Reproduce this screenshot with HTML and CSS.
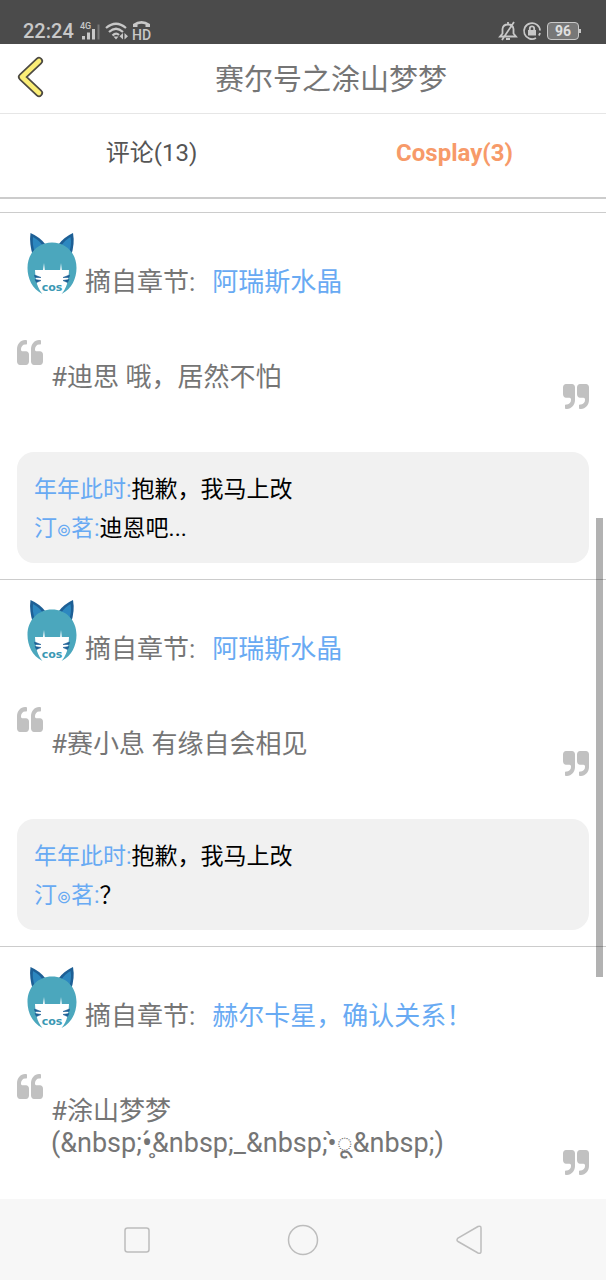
FILE: index.html
```html
<!DOCTYPE html>
<html lang="zh-CN">
<head>
<meta charset="utf-8">
<meta name="viewport" content="width=device-width, initial-scale=1">
<title>赛尔号之涂山梦梦</title>
<link rel="stylesheet" href="styles.css">
</head>
<body>
<svg class="defs" width="0" height="0" aria-hidden="true">
  <symbol id="quote" viewBox="0 128 1664 1408" preserveAspectRatio="none">
    <path d="M768 960v384q0 80-56 136t-136 56h-384q-80 0-136-56t-56-136v-704q0-104 40.500-198.500t109.500-163.500 163.500-109.500 198.500-40.500h64q26 0 45 19t19 45v128q0 26-19 45t-45 19h-64q-106 0-181 75t-75 181v32q0 40 28 68t68 28h224q80 0 136 56t56 136zm896 0v384q0 80-56 136t-136 56h-384q-80 0-136-56t-56-136v-704q0-104 40.500-198.500t109.500-163.500 163.500-109.500 198.500-40.500h64q26 0 45 19t19 45v128q0 26-19 45t-45 19h-64q-106 0-181 75t-75 181v32q0 40 28 68t68 28h224q80 0 136 56t56 136z"/>
  </symbol>
  <symbol id="cat" viewBox="0 0 50 64">
    <path d="M3.500 1Q13 5 19 13L6 24Q2 12 3.500 1z" fill="#1d5f95"/>
    <path d="M46 1Q37 5 31 13L44 24Q48 12 46 1z" fill="#1d5f95"/>
    <path d="M6 5Q12 8 16 14L8 21Q5 12 6 5z" fill="#2c87bf"/>
    <path d="M43.500 5Q38 8 34 14L42 21Q45 12 43.500 5z" fill="#2c87bf"/>
    <path d="M15.500 62C5 57 .5 46 .5 36C.5 21 11 10.500 25 10.500S49.500 21 49.500 36C49.500 46 45 57 34.500 62C39 57 41.500 50 42 38H34.800L34 31L33.200 38H17.800L17 31L16 38H8C8.500 50 11 57 15.500 62z" fill="#4ba7bd"/>
    <path d="M7.500 43L14 45.500L8 45.500zM8 47.500L14 48.500L9.500 50.500zM42.500 43L36 45.500L42 45.500zM42 47.500L36 48.500L40.500 50.500z" fill="#1d5f95" stroke="#1d5f95" stroke-width=".6"/>
    <text x="25" y="59" text-anchor="middle" class="cat-text">cos</text>
  </symbol>
</svg>

<div class="status">
  <div class="status-group">
    <span class="clock">22:24</span>
    <svg width="19" height="18" viewBox="0 0 19 18" fill="#c8c8c8"><text x="0" y="7" class="net-text">4G</text><path d="M2 14h3v3.500H2zM7 10.500h3v7H7zM12 7h3v10.500h-3z"/><path d="M17.500 2.500h2v15h-2z" fill="#777"/></svg>
    <svg width="22" height="18" viewBox="0 0 22 18" fill="none" stroke="#c8c8c8" stroke-width="2.200"><path d="M1 6Q11-2.500 21 6M4 10Q11 3.500 18 10M7.500 13.500Q11 10 14 13"/><path d="M8.500 14.500h5L11 17.500zM18 11v6.500l-3.500-3.200zM19.500 11v6.500l3.500-3.200z" fill="#c8c8c8" stroke="none"/></svg>
    <svg width="18" height="20" viewBox="0 0 18 20" fill="#c8c8c8"><path d="M0 6V3Q8.500-3 17 3v3h-4.500V3.500Q8.500 2.200 4.500 3.500V6z"/><text x="8.500" y="18.500" text-anchor="middle" class="hd-text">HD</text></svg>
  </div>
  <div class="status-group">
    <svg width="18" height="20" viewBox="0 0 18 20" fill="none" stroke="#c8c8c8" stroke-width="1.800"><path d="M1 15.500h16l-2.500-3V8Q14 3.500 9 3.500T3.500 8v4.500zM9 3.500V1M7 18h4M15 1L3 19"/></svg>
    <svg width="18" height="18" viewBox="0 0 18 18" fill="none" stroke="#c8c8c8" stroke-width="1.800"><path d="M13 16A8 8 0 1 1 17 8.500M17 11q-.4 1.500-1.200 2.500"/><rect x="5" y="8" width="8" height="5.500" fill="#c8c8c8" stroke="none"/><path d="M6.800 8V6.500a2.200 2.200 0 0 1 4.400 0V8"/></svg>
    <span class="battery">96</span>
  </div>
</div>

<header class="header">
  <button class="back" type="button" aria-label="返回">
    <svg width="28" height="42" viewBox="0 0 28 42" fill="none" stroke-linecap="round" stroke-linejoin="round"><path d="M22 5L5 21L22 37" stroke="#4d4a42" stroke-width="8"/><path d="M22 5L5 21L22 37" stroke="#fbee76" stroke-width="4.600"/></svg>
  </button>
  <h1 class="title">赛尔号之涂山梦梦</h1>
</header>

<div class="tabs" role="tablist">
  <button class="tab" type="button" role="tab" aria-selected="false">评论(13)</button>
  <button class="tab active" type="button" role="tab" aria-selected="true">Cosplay(3)</button>
</div>

<main class="list">
  <article class="entry">
    <div class="entry-head">
      <svg class="cat"><use href="#cat"/></svg>
      <span class="from">摘自章节:</span>
      <a class="chapter" href="#">阿瑞斯水晶</a>
    </div>
    <blockquote class="quote">
      <svg class="mark"><use href="#quote"/></svg>
      <p class="quote-text">#迪思 哦，居然不怕</p>
      <svg class="mark close"><use href="#quote"/></svg>
    </blockquote>
    <div class="replies">
      <p class="reply"><a class="user" href="#">年年此时:</a>抱歉，我马上改</p>
      <p class="reply"><a class="user" href="#">汀๏茗:</a>迪恩吧...</p>
    </div>
  </article>

  <article class="entry">
    <div class="entry-head">
      <svg class="cat"><use href="#cat"/></svg>
      <span class="from">摘自章节:</span>
      <a class="chapter" href="#">阿瑞斯水晶</a>
    </div>
    <blockquote class="quote">
      <svg class="mark"><use href="#quote"/></svg>
      <p class="quote-text">#赛小息 有缘自会相见</p>
      <svg class="mark close"><use href="#quote"/></svg>
    </blockquote>
    <div class="replies">
      <p class="reply"><a class="user" href="#">年年此时:</a>抱歉，我马上改</p>
      <p class="reply"><a class="user" href="#">汀๏茗:</a>？</p>
    </div>
  </article>

  <article class="entry">
    <div class="entry-head">
      <svg class="cat"><use href="#cat"/></svg>
      <span class="from">摘自章节:</span>
      <a class="chapter" href="#">赫尔卡星，确认关系！</a>
    </div>
    <blockquote class="quote">
      <svg class="mark"><use href="#quote"/></svg>
      <p class="quote-text">#涂山梦梦<br><span class="kaomoji">(&amp;nbsp;•̥́&amp;nbsp;_&amp;nbsp;•̀ू&amp;nbsp;)</span></p>
      <svg class="mark close"><use href="#quote"/></svg>
    </blockquote>
  </article>
  <div class="scrollbar"></div>
</main>

<nav class="navbar">
  <button class="nav-btn" type="button" aria-label="最近任务"><svg width="32" height="32" viewBox="0 0 32 32"><rect x="4" y="4" width="24" height="24" rx="2.500"/></svg></button>
  <button class="nav-btn" type="button" aria-label="主屏幕"><svg width="32" height="32" viewBox="0 0 32 32"><circle cx="16" cy="16" r="14.500"/></svg></button>
  <button class="nav-btn" type="button" aria-label="返回"><svg width="32" height="32" viewBox="0 0 32 32"><path d="M25 2.500L5 14Q3 16 5 17.500L25 29Q28 30 28 27.500V4Q28 1.500 25 2.500z"/></svg></button>
</nav>
</body>
</html>
```
FILE: styles.css
```css
* { box-sizing: border-box; }

body {
  margin: 0;
  height: 100vh;
  display: flex;
  flex-direction: column;
  background: #fff;
  color: #757575;
  font-family: Roboto, "Noto Sans CJK SC", "Noto Sans", sans-serif;
}

h1, p, blockquote { margin: 0; font-weight: 400; }
a { text-decoration: none; color: #68aaf3; }
button { border: 0; padding: 0; background: none; font: inherit; color: inherit; }
svg { display: block; flex: none; overflow: visible; }
.defs { display: none; }

.status {
  flex: none;
  display: flex;
  justify-content: space-between;
  height: 44px;
  padding: 18px 27px 0 23px;
  background: #4b4b4b;
  color: #c8c8c8;
}
.status-group { display: flex; align-items: center; gap: 6px; height: 26px; }
.clock { font-size: 20px; font-weight: 500; line-height: 26px; }
.net-text { font: 500 9px Roboto, sans-serif; }
.hd-text { font: 500 14px Roboto, sans-serif; }
.battery {
  position: relative;
  width: 32px;
  height: 18px;
  border: 1px solid #c8c8c8;
  border-radius: 4px;
  background: #777;
  color: #e0e0e0;
  font-size: 14px;
  font-weight: 700;
  line-height: 16px;
  text-align: center;
}
.battery::after {
  content: "";
  position: absolute;
  left: 31px;
  top: 6px;
  width: 2px;
  height: 4px;
  background: #c8c8c8;
}

.header {
  flex: none;
  display: grid;
  grid-template-columns: 56px 1fr;
  height: 70px;
  border-bottom: 1px solid #e6e6e6;
}
.back { padding: 0 0 4px 17px; }
.title { padding-top: 16px; font-size: 29px; line-height: 40px; text-align: center; }

.tabs {
  flex: none;
  display: grid;
  grid-template-columns: 1fr 1fr;
  height: 85px;
  border-bottom: 2px solid #ccc;
  font-size: 24px;
  line-height: 30px;
  color: #555;
}
.tab { height: 78px; }
.tab.active { color: #f79a69; font-weight: 700; }

.list {
  position: relative;
  flex: 1;
  min-height: 0;
  overflow: hidden;
  padding-top: 13px;
}
.entry { padding: 19px 17px 16px; border-top: 1px solid #ccc; }
.entry-head { display: flex; align-items: flex-end; padding-left: 10px; font-size: 26px; line-height: 28px; }
.cat { width: 50px; height: 64px; margin-right: 8px; }
.cat-text { font: 700 11px "DejaVu Sans", sans-serif; fill: #3b98b4; }
.from { margin-right: 17px; }

.quote {
  display: grid;
  grid-template-columns: 26px 1fr 26px;
  column-gap: 8px;
  margin-top: 44px;
}
.mark { width: 26px; height: 25px; fill: #c1c1c1; }
.mark.close { align-self: end; transform: rotate(180deg); }
.quote-text { padding: 21px 0 16px; font-size: 26px; line-height: 32px; }
.kaomoji { font-size: 27px; line-height: 30px; }

.replies {
  margin-top: 43px;
  padding: 18px 17px 15px;
  border-radius: 17px;
  background: #f1f1f1;
  color: #000;
  font-size: 23px;
  line-height: 39px;
}

.scrollbar {
  position: absolute;
  top: 319px;
  right: 3px;
  width: 7px;
  height: 459px;
  background: rgba(0, 0, 0, 0.3);
}

.navbar {
  flex: none;
  display: flex;
  justify-content: space-between;
  align-items: center;
  height: 81px;
  padding: 0 20%;
  background: #f7f7f7;
}
.nav-btn svg { fill: none; stroke: #bdbdbd; stroke-width: 1.5; }
```
